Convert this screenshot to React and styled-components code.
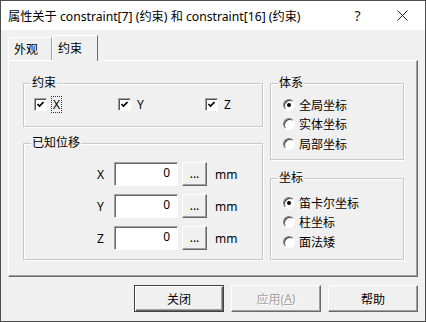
import React from 'react';
import styled, { createGlobalStyle } from 'styled-components';

const GlobalStyle = createGlobalStyle`
  html, body {
    margin: 0;
    padding: 0;
    background: #f0f0f0;
  }
  body {
    font-family: "Noto Sans", "Noto Sans CJK SC", sans-serif;
    font-size: 12px;
    color: #000;
  }
`;

const Window = styled.div`
  width: 426px;
  height: 322px;
  box-sizing: border-box;
  border: 1px solid #4d4d4d;
  background: #f0f0f0;
  display: flex;
  flex-direction: column;
`;

const TitleBar = styled.div`
  height: 29px;
  flex: none;
  background: #fff;
  display: flex;
  align-items: center;
  padding-left: 7px;
`;

const Title = styled.div`
  flex: 1;
  font-size: 12.2px;
  white-space: nowrap;
`;

const TitleButton = styled.div`
  width: 45px;
  height: 29px;
  display: flex;
  align-items: center;
  justify-content: center;
  font-size: 14px;
  color: #222;
`;

const Body = styled.div`
  flex: 1;
  display: flex;
  flex-direction: column;
  padding: 0 7px;
`;

const TabStrip = styled.div`
  height: 30px;
  display: flex;
  align-items: flex-end;
`;

const Tab = styled.div`
  position: relative;
  box-sizing: border-box;
  width: ${p => (p.$active ? 46 : 44)}px;
  height: ${p => (p.$active ? 26 : 23)}px;
  margin-bottom: ${p => (p.$active ? -1 : 0)}px;
  padding: ${p => (p.$active ? 3 : 2)}px 0 0 5px;
  background: #f0f0f0;
  border-top: 1px solid #fff;
  border-left: 1px solid #fff;
  border-right: 1px solid ${p => (p.$active ? '#696969' : '#a0a0a0')};
  z-index: ${p => (p.$active ? 1 : 0)};
`;

const Panel = styled.div`
  height: 217px;
  box-sizing: border-box;
  border: 1px solid;
  border-color: #fff #696969 #696969 #fff;
  box-shadow: inset -1px -1px 0 #a0a0a0;
  padding: 22px 0 0 14px;
  display: grid;
  grid-template-columns: 240px 134px;
  column-gap: 7px;
  align-content: start;
`;

const Column = styled.div`
  display: flex;
  flex-direction: column;
  gap: ${p => p.$gap}px;
`;

const Group = styled.div`
  position: relative;
  box-sizing: border-box;
  height: ${p => p.$h}px;
  border: 1px solid #c8c8c8;
  box-shadow: inset 1px 1px 0 #fff, 1px 1px 0 #fff;
`;

const Legend = styled.span`
  position: absolute;
  top: -9px;
  left: 7px;
  padding: 0 1px;
  background: #f0f0f0;
  line-height: 16px;
`;

const CheckRow = styled.div`
  display: grid;
  grid-template-columns: 84px 87px auto;
  padding: 12px 0 0 10px;
`;

const CheckItem = styled.label`
  display: flex;
  align-items: center;
  gap: 5px;
  height: 16px;
`;

const CheckBox = styled.span`
  width: 13px;
  height: 13px;
  box-sizing: border-box;
  background: #fff;
  border: 1px solid;
  border-color: #a0a0a0 #fff #fff #a0a0a0;
  box-shadow: inset 1px 1px 0 #555;
  display: flex;
  align-items: center;
  justify-content: center;
`;

const CheckText = styled.span`
  padding: 0 1px;
  line-height: 15px;
  outline: ${p => (p.$focus ? '1px dotted #333' : 'none')};
`;

const FieldRows = styled.div`
  display: flex;
  flex-direction: column;
  gap: 8px;
  padding: 18px 0 0 73px;
`;

const FieldRow = styled.div`
  display: flex;
  align-items: center;
  height: 24px;
`;

const FieldLabel = styled.span`
  width: 17px;
`;

const Field = styled.div`
  width: 64px;
  height: 24px;
  box-sizing: border-box;
  background: #fff;
  border: 1px solid;
  border-color: #a0a0a0 #fff #fff #a0a0a0;
  box-shadow: inset 1px 1px 0 #696969;
  text-align: right;
  padding: 2px 7px 0 0;
  line-height: 16px;
`;

const DotsButton = styled.div`
  width: 25px;
  height: 24px;
  margin-left: 4px;
  box-sizing: border-box;
  border: 1px solid;
  border-color: #fff #696969 #696969 #fff;
  box-shadow: inset -1px -1px 0 #a0a0a0;
  display: flex;
  justify-content: center;
  padding-top: 3px;
  font-size: 12px;
  line-height: 16px;
`;

const Unit = styled.span`
  margin-left: 8px;
`;

const RadioList = styled.div`
  display: flex;
  flex-direction: column;
  padding: ${p => p.$pt}px 0 0 12px;
`;

const RadioItem = styled.label`
  display: flex;
  align-items: center;
  gap: 4px;
  height: 19.5px;
`;

const RadioCircle = styled.span`
  width: 12px;
  height: 12px;
  box-sizing: border-box;
  border-radius: 50%;
  background: #fff;
  border: 1px solid;
  border-color: #808080 #fff #fff #808080;
  box-shadow: inset 1px 1px 0 #404040;
  display: flex;
  align-items: center;
  justify-content: center;
  &::after {
    content: '';
    width: 4px;
    height: 4px;
    border-radius: 50%;
    background: ${p => (p.$on ? '#000' : 'transparent')};
  }
`;

const ButtonRow = styled.div`
  display: flex;
  justify-content: flex-end;
  gap: 7px;
  margin-top: 8px;
`;

const Button = styled.div`
  width: 90px;
  height: 27px;
  box-sizing: border-box;
  display: flex;
  align-items: center;
  justify-content: center;
  border: 1px solid;
  border-color: ${p => (p.$default ? '#404040' : '#fff #696969 #696969 #fff')};
  box-shadow: ${p =>
    p.$default
      ? 'inset 1px 1px 0 #fff, inset -1px -1px 0 #696969, inset -2px -2px 0 #a0a0a0'
      : 'inset -1px -1px 0 #a0a0a0'};
  color: ${p => (p.$disabled ? '#a0a0a0' : '#000')};
  text-shadow: ${p => (p.$disabled ? '1px 1px 0 #fff' : 'none')};
`;

const Check = () => (
  <svg width="7" height="7" viewBox="0 0 7 7">
    <path d="M0.5 3 L2.5 5 L6.5 1" fill="none" stroke="#000" strokeWidth="1.6" />
  </svg>
);

const CloseGlyph = () => (
  <svg width="11" height="11" viewBox="0 0 11 11">
    <path d="M0.5 0.5 L10.5 10.5 M10.5 0.5 L0.5 10.5" stroke="#222" strokeWidth="1" />
  </svg>
);

const Radio = ({ on, children }) => (
  <RadioItem>
    <RadioCircle $on={on} />
    <span>{children}</span>
  </RadioItem>
);

const axes = ['X', 'Y', 'Z'];

export default function App() {
  return (
    <Window>
      <GlobalStyle />
      <TitleBar>
        <Title>属性关于 constraint[7] (约束) 和 constraint[16] (约束)</Title>
        <TitleButton>?</TitleButton>
        <TitleButton><CloseGlyph /></TitleButton>
      </TitleBar>
      <Body>
        <TabStrip>
          <Tab>外观</Tab>
          <Tab $active>约束</Tab>
        </TabStrip>
        <Panel>
          <Column $gap={16}>
            <Group $h={44}>
              <Legend>约束</Legend>
              <CheckRow>
                {axes.map((a, i) => (
                  <CheckItem key={a}>
                    <CheckBox><Check /></CheckBox>
                    <CheckText $focus={i === 0}>{a}</CheckText>
                  </CheckItem>
                ))}
              </CheckRow>
            </Group>
            <Group $h={117}>
              <Legend>已知位移</Legend>
              <FieldRows>
                {axes.map(a => (
                  <FieldRow key={a}>
                    <FieldLabel>{a}</FieldLabel>
                    <Field>0</Field>
                    <DotsButton>...</DotsButton>
                    <Unit>mm</Unit>
                  </FieldRow>
                ))}
              </FieldRows>
            </Group>
          </Column>
          <Column $gap={18}>
            <Group $h={77}>
              <Legend>体系</Legend>
              <RadioList $pt={11}>
                <Radio on>全局坐标</Radio>
                <Radio>实体坐标</Radio>
                <Radio>局部坐标</Radio>
              </RadioList>
            </Group>
            <Group $h={82}>
              <Legend>坐标</Legend>
              <RadioList $pt={14}>
                <Radio on>笛卡尔坐标</Radio>
                <Radio>柱坐标</Radio>
                <Radio>面法矮</Radio>
              </RadioList>
            </Group>
          </Column>
        </Panel>
        <ButtonRow>
          <Button $default>关闭</Button>
          <Button $disabled>应用(<u>A</u>)</Button>
          <Button>帮助</Button>
        </ButtonRow>
      </Body>
    </Window>
  );
}
